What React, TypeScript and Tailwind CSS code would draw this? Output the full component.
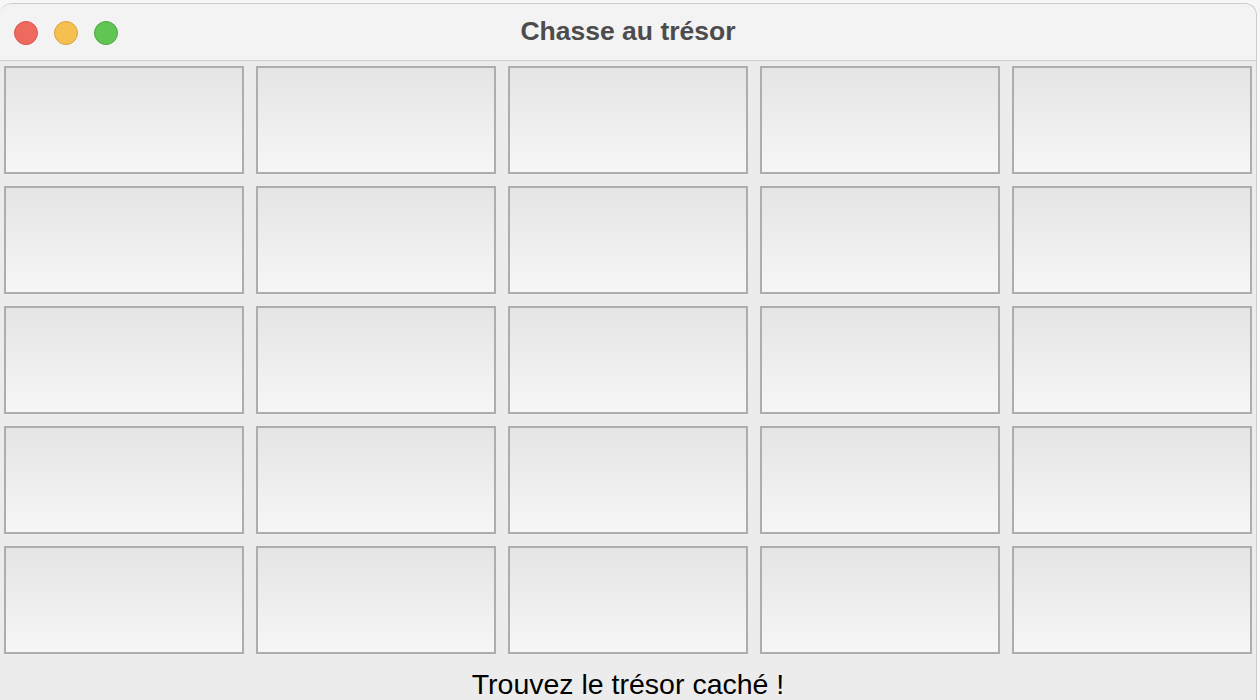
const cells = Array.from({ length: 25 }, (_, i) => i);

function TrafficLights() {
  return (
    <div className="absolute left-[14px] top-[17px] flex gap-[16px]">
      <span className="block h-[24px] w-[24px] rounded-full border border-[#d5574f] bg-[#ef6a5e]" />
      <span className="block h-[24px] w-[24px] rounded-full border border-[#d9a23b] bg-[#f6c050]" />
      <span className="block h-[24px] w-[24px] rounded-full border border-[#4fa63f] bg-[#61c554]" />
    </div>
  );
}

export default function App() {
  return (
    <div className="h-[700px] w-[1260px] overflow-hidden bg-[#f7f7f7] font-['Liberation_Sans',Arial,sans-serif]">
      <div className="mt-[3px] h-[697px] w-[1257px] rounded-t-[12px] border-r border-t border-[#cdcdcd] bg-[#ececec]">
        {/* Title bar */}
        <div className="relative flex h-[57px] items-center justify-center rounded-t-[12px] border-b border-[#cfcfcf] bg-[#f3f3f4]">
          <TrafficLights />
          <span className="text-[26.5px] font-bold text-[#4c4c4c]">Chasse au trésor</span>
        </div>

        {/* Board */}
        <div className="grid grid-cols-5 gap-[12px] pl-[4px] pt-[5px] w-[1252px]">
          {cells.map((i) => (
            <button
              key={i}
              className="h-[108px] border-2 border-[#adadad] bg-gradient-to-b from-[#e5e5e5] to-[#f6f6f6]"
            />
          ))}
        </div>

        <div className="mt-[14px] text-center text-[28.5px] leading-[32px] text-black">
          Trouvez le trésor caché !
        </div>
      </div>
    </div>
  );
}
